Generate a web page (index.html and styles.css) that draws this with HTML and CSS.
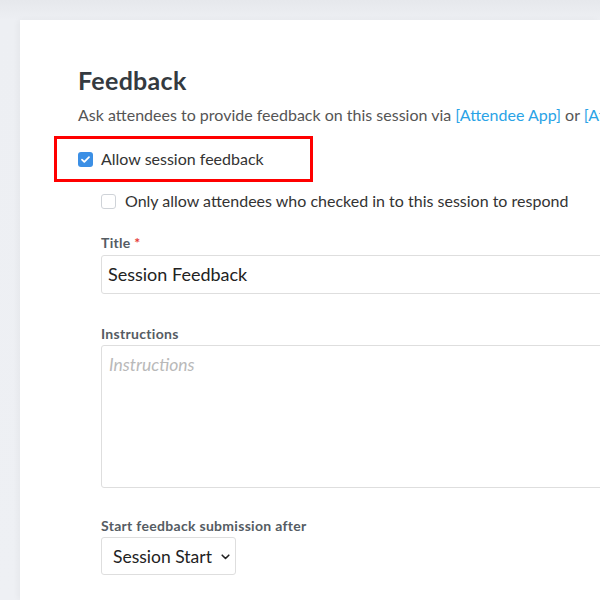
FILE: index.html
```html
<!DOCTYPE html>
<html>
<head>
<meta charset="utf-8">
<link rel="stylesheet" href="styles.css">
</head>
<body>
<div class="page">
  <div class="card">
    <h1 class="title">Feedback</h1>
    <p class="desc">Ask attendees to provide feedback on this session via <a class="link">[Attendee App]</a> or <a class="link">[At</a></p>
    <div class="highlight">
      <label class="check-row">
        <span class="box checked">
          <svg width="15" height="15" viewBox="0 0 15 15"><path d="M4 7.6 L6.3 9.8 L11 5.2" fill="none" stroke="#fff" stroke-width="1.8" stroke-linecap="round" stroke-linejoin="round"/></svg>
        </span>
        <span>Allow session feedback</span>
      </label>
    </div>
    <div class="indent">
      <label class="check-row sub">
        <span class="box"></span>
        <span>Only allow attendees who checked in to this session to respond</span>
      </label>
      <div class="field f-title">
        <div class="label">Title <span class="req">*</span></div>
        <div class="input">Session Feedback</div>
      </div>
      <div class="field f-instr">
        <div class="label">Instructions</div>
        <div class="textarea"><span class="placeholder">Instructions</span></div>
      </div>
      <div class="field f-start">
        <div class="label">Start feedback submission after</div>
        <div class="select">
          <span>Session Start</span>
          <svg class="chev" width="9" height="6" viewBox="0 0 9 6"><path d="M1.2 1.2 L4.5 4.5 L7.8 1.2" fill="none" stroke="#222" stroke-width="1.6" stroke-linecap="round" stroke-linejoin="round"/></svg>
        </div>
      </div>
    </div>
  </div>
</div>
</body>
</html>
```

FILE: styles.css
```css
html, body {
  margin: 0;
  padding: 0;
}
body {
  width: 600px;
  height: 600px;
  overflow: hidden;
  background: linear-gradient(#e6e8ec, #edeff3 20px, #eef0f4);
  font-family: "Lato", "Noto Sans", sans-serif;
  color: #333;
}
.page {
  padding: 20px 0 0 20px;
}
.card {
  width: 580px;
  height: 580px;
  overflow: hidden;
  background: #fff;
  box-shadow: -2px 0 6px rgba(0, 0, 0, 0.04);
  padding: 45px 0 0 58px;
  box-sizing: border-box;
}
.title {
  margin: 0;
  font-size: 25px;
  line-height: 30px;
  font-weight: 700;
  color: #343a40;
  letter-spacing: 0.3px;
}
.desc {
  margin: 10px 0 0;
  font-size: 16px;
  line-height: 20px;
  color: #555;
  white-space: nowrap;
}
.link {
  color: #2aa3e6;
}
.highlight {
  margin: 11px 0 0 -24px;
  width: 259px;
  height: 46px;
  box-sizing: border-box;
  border: 3px solid #ff0000;
  padding-left: 21px;
  display: flex;
  align-items: center;
}
.check-row {
  display: flex;
  align-items: center;
  gap: 8px;
  font-size: 16px;
  line-height: 20px;
  color: #333;
  white-space: nowrap;
}
.box {
  width: 15px;
  height: 15px;
  flex: none;
  box-sizing: border-box;
  border: 1px solid #cfd3d8;
  border-radius: 3px;
  background: #fff;
  display: flex;
}
.box.checked {
  border: none;
  background: #3b8fe5;
}
.indent {
  padding-left: 23px;
}
.sub {
  margin-top: 9px;
  gap: 9px;
}
.field {
  display: flex;
  flex-direction: column;
}
.label {
  font-size: 14px;
  line-height: 16px;
  font-weight: 700;
  color: #555c63;
  margin-bottom: 4px;
  letter-spacing: 0.3px;
}
.req {
  color: #e53935;
}
.f-title {
  margin-top: 24px;
}
.input {
  width: 600px;
  height: 39px;
  box-sizing: border-box;
  border: 1px solid #dedede;
  border-radius: 3px;
  padding: 0 6px 2px;
  display: flex;
  align-items: center;
  font-size: 18px;
  color: #222;
}
.f-instr {
  margin-top: 32px;
}
.f-instr .label {
  margin-bottom: 3px;
}
.textarea {
  width: 600px;
  height: 143px;
  box-sizing: border-box;
  border: 1px solid #dedede;
  border-radius: 3px;
  padding: 8px 7px;
}
.placeholder {
  font-size: 17.5px;
  line-height: 22px;
  font-style: italic;
  color: #b9b9b9;
}
.f-start {
  margin-top: 30px;
}
.f-start .label {
  margin-bottom: 3px;
}
.select {
  width: 135px;
  height: 38px;
  box-sizing: border-box;
  border: 1px solid #dedede;
  border-radius: 3px;
  padding: 0 0 0 11px;
  display: flex;
  align-items: center;
  gap: 9px;
  font-size: 17.5px;
  color: #222;
}
.chev {
  flex: none;
  margin-top: 1px;
}
```
